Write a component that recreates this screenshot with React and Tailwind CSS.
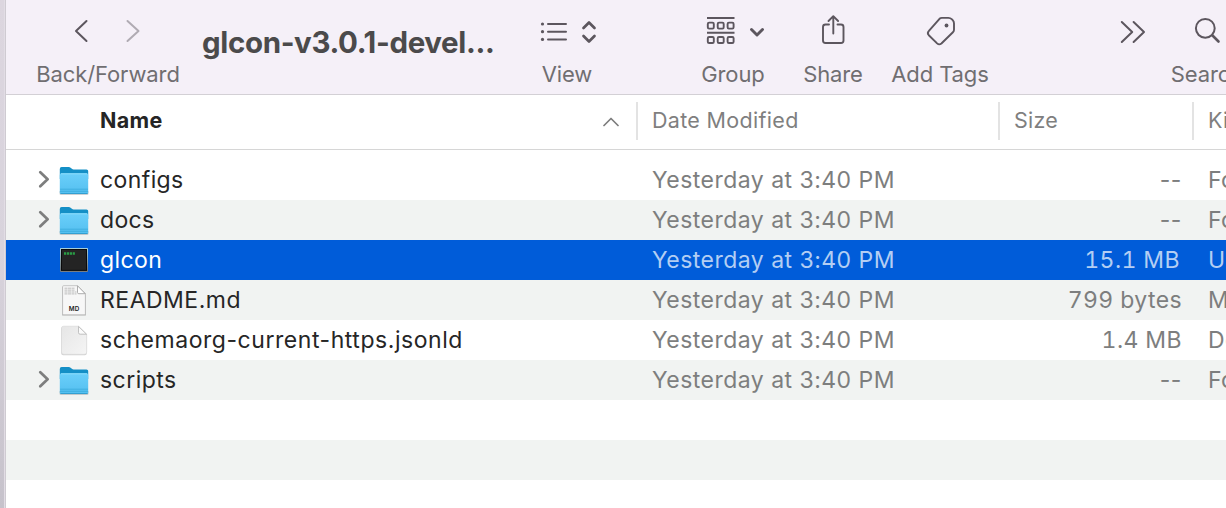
const stroke = {
  fill: "none",
  stroke: "#5c565e",
  strokeWidth: 2,
  strokeLinecap: "round",
  strokeLinejoin: "round",
};

function Tool({ cell, label, x, w, children }) {
  return (
    <div className={"flex shrink-0 flex-col items-center " + cell}>
      <svg width={w} height="60" viewBox={`${x} 0 ${w} 60`} {...stroke} className="block shrink-0">
        {children}
      </svg>
      <span className="whitespace-nowrap text-[22px] leading-7 tracking-[-0.1px] text-[#706e71]">{label}</span>
    </div>
  );
}

function Toolbar() {
  return (
    <header className="flex h-[95px] shrink-0 border-b border-[#d3d0d5] bg-[#f5f0f8] pl-5">
      <Tool cell="w-[164px]" x={26} w={164} label="Back/Forward">
        <path d="M86.5 21 76 31l10.500 10" />
        <path d="M127.500 21 138.500 31l-11 10" stroke="#b0abb3" />
      </Tool>
      <h1 className="ml-3 w-[301px] shrink-0 whitespace-nowrap pt-[22px] text-[29.500px] font-bold leading-10 tracking-[-0.360px] text-[#4b4a4b]">
        glcon-v3.0.1-devel...
      </h1>
      <Tool cell="w-[128px]" x={503} w={128} label="View">
        <path d="M548 24h18M548 31.700h18M548 39.400h18" />
        <g fill="#5c565e" stroke="none">
          <circle cx="542.500" cy="24" r="1.600" />
          <circle cx="542.500" cy="31.700" r="1.600" />
          <circle cx="542.500" cy="39.400" r="1.600" />
        </g>
        <path d="m583.500 28 5.500-5.500 5.500 5.500M583.500 36l5.500 5.500 5.500-5.500" strokeWidth="2.700" />
      </Tool>
      <Tool cell="ml-[37px] w-[130px]" x={668} w={130} label="Group">
        <path d="M707 18h27.500M707 32.700h27.500" strokeWidth="1.900" strokeLinecap="butt" />
        <g strokeWidth="1.900">
          {[22.600, 37].map((y) =>
            [707.800, 717.700, 727.600].map((bx) => (
              <rect key={bx + "-" + y} x={bx} y={y} width="6" height="6" rx="1.300" />
            ))
          )}
        </g>
        <path d="m751.500 29.500 5.500 5.500 5.500-5.500" strokeWidth="2.900" />
      </Tool>
      <Tool cell="w-[70px]" x={798} w={70} label="Share">
        <path d="M829 24.500h-3.500q-2.500 0-2.500 2.500v13.500q0 2.500 2.500 2.500h15.500q2.500 0 2.500-2.500V27q0-2.500-2.500-2.500h-3.500" strokeWidth="1.900" />
        <path d="M833.300 33.500V16.500M828.500 21l4.800-4.800 4.800 4.800" strokeWidth="1.900" />
      </Tool>
      <Tool cell="w-[144px]" x={868} w={144} label="Add Tags">
        <path d="M939.500 18.800q1-.9 2.400-.9h6.500q2 0 3.300 1.300l1 1q1.300 1.300 1.300 3.200v6.300q0 1.600-1.100 2.600l-11.500 11.200q-2.200 1.800-4.300-.1l-8.300-8.200q-2-2.200.1-4.300z" strokeWidth="1.900" />
        <circle cx="946.500" cy="25.500" r="1.900" fill="#5c565e" stroke="none" />
      </Tool>
      <Tool cell="ml-[95px] w-[50px]" x={1107} w={50} label="">
        <path d="M1121.800 22l10.400 10-10.400 10M1133.600 22l10.400 10-10.400 10" />
      </Tool>
      <Tool cell="w-[100px]" x={1157} w={100} label="Search">
        <circle cx="1205.300" cy="28.300" r="9.400" />
        <path d="m1212.500 35.500 6 6" strokeWidth="2.600" />
      </Tool>
    </header>
  );
}

function ColumnHeader() {
  return (
    <div className="flex h-[55px] shrink-0 items-start border-b border-[#d6d6d6] pt-[7px] text-[21.500px] leading-[37px] text-[#7f7f7f]">
      <div className="flex h-[38px] w-[632px] shrink-0 items-start justify-between border-r-2 border-[#e3e3e3] pl-[94px] pr-[17px]">
        <span className="font-bold tracking-[0.350px] text-[#252525]">Name</span>
        <svg width="16" height="10" viewBox="0 0 16 10" {...stroke} stroke="#7d7d7d" strokeWidth="1.700" className="mt-[15px]">
          <path d="m1 8.500 7-7 7 7" />
        </svg>
      </div>
      <div className="h-[38px] w-[362px] shrink-0 border-r-2 border-[#e3e3e3] pl-3.5 tracking-[0.320px]">Date Modified</div>
      <div className="h-[38px] w-[194px] shrink-0 border-r-2 border-[#e3e3e3] pl-3.5 tracking-[0.2px]">Size</div>
      <div className="h-[38px] pl-3.5 tracking-[0.2px]">Kind</div>
    </div>
  );
}

function FolderIcon() {
  return (
    <svg width="32" height="32" viewBox="0 0 32 32" className="block">
      <defs>
        <linearGradient id="folder" x1="0" y1="0" x2="0" y2="1">
          <stop offset="0" stopColor="#6acffa" />
          <stop offset="1" stopColor="#54bff0" />
        </linearGradient>
      </defs>
      <path d="M1.500 27h29v2.500q0 1.500-1.500 1.500H3q-1.500 0-1.500-1.500z" fill="#6d7a80" opacity=".35" />
      <path d="M1.800 5q0-1.900 1.800-1.900h7.200q1 0 1.800.7l1.300 1q.7.600 1.700.600H28.500q1.700 0 1.700 1.700v8H1.800z" fill="#148fc6" />
      <path d="M1.800 10.900q0-1.600 1.600-1.600h25.200q1.600 0 1.600 1.600v17.700q0 1.300-1.300 1.300H3.100q-1.300 0-1.300-1.300z" fill="url(#folder)" />
      <path d="M3 9.800h26" stroke="#91e0fd" strokeWidth=".9" />
      <path d="M2 25.200h28M2 27.300h28" stroke="#3aa9db" strokeWidth=".8" />
      <path d="M2.400 29.500h27.200" stroke="#2b98ca" strokeWidth=".8" />
    </svg>
  );
}

function ExecIcon() {
  return (
    <svg width="32" height="32" viewBox="0 0 32 32" className="block">
      <defs>
        <linearGradient id="bezel" x1="0" y1="0" x2="0" y2="1">
          <stop offset="0" stopColor="#b9e8f5" />
          <stop offset="1" stopColor="#777b80" />
        </linearGradient>
      </defs>
      <rect x="2" y="4" width="28" height="24" rx="1" fill="url(#bezel)" />
      <rect x="2.900" y="4.900" width="26.200" height="22" fill="#080808" />
      <rect x="3.900" y="5.900" width="24.200" height="20" fill="#242424" />
      <path d="M6 9.500h11" stroke="#2a9d45" strokeWidth="2.300" strokeDasharray="2.200 .7" />
    </svg>
  );
}

function DocumentIcon({ markdown }) {
  return (
    <svg width="32" height="32" viewBox="0 0 32 32" className="block">
      <defs>
        <linearGradient id="paper" x1="0" y1="0" x2="1" y2="1">
          <stop offset="0" stopColor="#e6e6e6" />
          <stop offset="1" stopColor="#f5f5f5" />
        </linearGradient>
      </defs>
      {markdown ? (
        <>
          <path d="M4 3h16l8 8v20.500H4z" fill="#8d8d8d" opacity=".55" />
          <path d="M4.600 2.700q0-1 1-1H19.500l7.900 7.800v20.300q0 1-1 1H5.600q-1 0-1-1z" fill="#f7f7f7" stroke="#b9b9b9" strokeWidth=".8" />
          <path d="M6.500 4.200h10M6.500 6.100h10M6.500 8h12M6.500 9.900h12" stroke="#bdbdbd" strokeWidth="1" strokeDasharray="3 .5" />
          <path d="M19.500 1.800v6.600q0 1.300 1.300 1.300H27.200z" fill="#fff" stroke="#a4a4a4" strokeWidth=".9" />
          <text x="16" y="26.800" textAnchor="middle" fontSize="6.300" fontWeight="600" letterSpacing=".1" fill="#222" fontFamily="Inter, sans-serif">MD</text>
        </>
      ) : (
        <>
          <path d="M3.200 5q0-2.200 2.200-2.200H20l8.800 7.600v18.800q0 2-2 2H5.200q-2 0-2-2z" fill="#c8c8c8" opacity=".8" />
          <path d="M3.500 4.200q0-2 2-2H20.500l8.200 8v17.900q0 2.200-2.200 2.200H5.700q-2.200 0-2.200-2.200z" fill="url(#paper)" stroke="#d9d9d9" strokeWidth=".6" />
          <path d="M20.500 2.400v6.200q0 1.600 1.600 1.600h6.400z" fill="#fbfbfb" stroke="#b4b4b4" strokeWidth=".8" />
        </>
      )}
    </svg>
  );
}

const files = [
  { name: "configs", type: "folder", size: "--", kind: "Folder", nameGap: "tracking-[0.4px]" },
  { name: "docs", type: "folder", size: "--", kind: "Folder", nameGap: "tracking-[0.350px]" },
  { name: "glcon", type: "exec", size: "15.1 MB", kind: "Unix executable", nameGap: "tracking-[0.4px]", selected: true },
  { name: "README.md", type: "md", size: "799 bytes", kind: "Markdown", nameGap: "tracking-[0.5px]" },
  { name: "schemaorg-current-https.jsonld", type: "doc", size: "1.4 MB", kind: "Document", nameGap: "tracking-[0.550px]" },
  { name: "scripts", type: "folder", size: "--", kind: "Folder", nameGap: "tracking-[0.450px]" },
];

function FileRow({ file, striped }) {
  const { selected } = file;
  const background = selected ? "bg-[#005cd9]" : striped ? "bg-[#f1f3f2]" : "bg-white";
  const muted = selected ? "text-[#b3cef3]" : "text-[#7d7e7e]";
  const sizeStyle = file.size === "--" ? "tracking-[0.6px] " : "tabular-nums tracking-[0.4px] ";
  return (
    <li className={"flex h-10 shrink-0 items-center whitespace-nowrap text-[23px] leading-10 " + background}>
      <div className="flex w-[52px] shrink-0 justify-end pr-2">
        {file.type === "folder" && (
          <svg width="12" height="18" viewBox="0 0 12 18" {...stroke} stroke="#7d7e7e" strokeWidth="2.700" className="-mt-0.5">
            <path d="m2.300 2.300 7.300 7-7.300 7" />
          </svg>
        )}
      </div>
      <div className="w-[42px] shrink-0">
        {file.type === "folder" && <FolderIcon />}
        {file.type === "exec" && <ExecIcon />}
        {file.type === "md" && <DocumentIcon markdown />}
        {file.type === "doc" && <DocumentIcon />}
      </div>
      <span className={"w-[552px] shrink-0 " + file.nameGap + (selected ? " text-white" : " text-[#262626]")}>{file.name}</span>
      <span className={"w-[350px] shrink-0 tracking-[0.470px] " + muted}>Yesterday at 3:40 PM</span>
      <span className={"w-[180px] shrink-0 text-right " + sizeStyle + (selected ? "pr-0.5 " : "") + muted}>{file.size}</span>
      <span className={"pl-[26px] tracking-[0.3px] " + muted}>{file.kind}</span>
    </li>
  );
}

export default function App() {
  return (
    <div className="flex h-[508px] w-[1226px] overflow-hidden bg-white font-['Inter',sans-serif]">
      <div className="w-1 shrink-0 bg-linear-to-b from-[#dcd6df] via-[#d8d3dc] to-[#c6c2cb]" />
      <div className="w-0.5 shrink-0 border-r border-[#cfcbd2] bg-[#e2dde5]" />
      <main className="flex w-[1220px] shrink-0 flex-col overflow-hidden">
        <Toolbar />
        <ColumnHeader />
        <ul className="flex flex-col pt-2.5">
          {files.map((file, i) => (
            <FileRow key={file.name} file={file} striped={i % 2 === 1} />
          ))}
          <li className="h-10 bg-white" />
          <li className="h-10 bg-[#f1f3f2]" />
        </ul>
      </main>
    </div>
  );
}
